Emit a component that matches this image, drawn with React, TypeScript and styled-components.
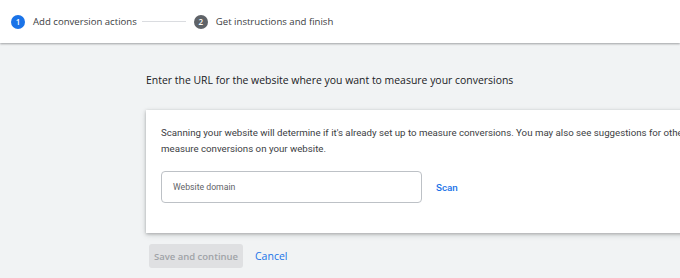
import React from "react";
import styled, { createGlobalStyle } from "styled-components";

const GlobalStyle = createGlobalStyle`
  html, body {
    margin: 0;
    padding: 0;
    background: #f1f3f4;
    overflow: hidden;
  }
  body {
    font-family: Roboto, "Liberation Sans", sans-serif;
    color: #202124;
  }
`;

const Page = styled.div`
  width: 680px;
  height: 278px;
  overflow: hidden;
  display: flex;
  flex-direction: column;
`;

const Header = styled.div`
  height: 43px;
  background: #fff;
  box-shadow: 0 1px 2px rgba(60, 64, 67, 0.45);
  display: flex;
  align-items: center;
  padding-left: 11px;
  flex-shrink: 0;
  position: relative;
  z-index: 1;
`;

const Step = styled.div`
  display: flex;
  align-items: center;
  gap: 8px;
  font-family: "Open Sans", Roboto, sans-serif;
  font-size: 9.6px;
  color: #3c4043;
`;

const StepNum = styled.span<{ $active?: boolean }>`
  width: 14px;
  height: 14px;
  border-radius: 50%;
  background: ${(p) => (p.$active ? "#1a73e8" : "#5f6368")};
  color: #fff;
  font-size: 8px;
  font-weight: 600;
  display: flex;
  align-items: center;
  justify-content: center;
`;

const Connector = styled.div`
  width: 44px;
  height: 1px;
  background: #dadce0;
  margin: 0 8px 0 5px;
`;

const Main = styled.div`
  display: flex;
  flex-direction: column;
  padding-left: 146px;
  padding-top: 29px;
`;

const Title = styled.div`
  font-family: "Open Sans", Roboto, sans-serif;
  font-size: 10.45px;
  color: #202124;
  line-height: 16px;
`;

const Card = styled.div`
  margin-top: 22px;
  width: 640px;
  height: 123px;
  box-sizing: border-box;
  background: #fff;
  box-shadow: 0 1px 3px rgba(60, 64, 67, 0.35), 0 2px 6px rgba(60, 64, 67, 0.15);
  padding: 15px 15px 0;
  display: flex;
  flex-direction: column;
`;

const Body = styled.div`
  font-size: 9.7px;
  line-height: 16px;
  color: #3c4043;
`;

const BodyLine = styled.div`
  white-space: nowrap;
`;

const InputRow = styled.div`
  display: flex;
  align-items: center;
  margin-top: 14px;
  gap: 14px;
`;

const Input = styled.div`
  width: 261px;
  height: 32px;
  box-sizing: border-box;
  border: 1px solid #bdc1c6;
  border-radius: 4px;
  display: flex;
  align-items: center;
  padding-left: 11px;
  font-size: 8.7px;
  color: #5f6368;
`;

const LinkButton = styled.span<{ $font?: string; $size?: number }>`
  color: #1a73e8;
  font-size: ${(p) => p.$size || 9.8}px;
  font-family: ${(p) => p.$font || "Roboto, sans-serif"};
  font-weight: 500;
`;

const Actions = styled.div`
  display: flex;
  align-items: center;
  margin-top: 11px;
  margin-left: 3px;
  gap: 12px;
`;

const SaveButton = styled.div`
  width: 94px;
  height: 24px;
  border-radius: 3px;
  background: #dfe0e2;
  color: #a0a3a7;
  font-family: "Open Sans", Roboto, sans-serif;
  font-size: 9.5px;
  font-weight: 600;
  display: flex;
  align-items: center;
  justify-content: center;
`;

export default function App() {
  return (
    <Page>
      <GlobalStyle />
      <Header>
        <Step>
          <StepNum $active>1</StepNum>
          Add conversion actions
        </Step>
        <Connector />
        <Step>
          <StepNum>2</StepNum>
          Get instructions and finish
        </Step>
      </Header>
      <Main>
        <Title>
          Enter the URL for the website where you want to measure your conversions
        </Title>
        <Card>
          <Body>
            <BodyLine>
              Scanning your website will determine if it's already set up to measure
              conversions. You may also see suggestions for other ways to
            </BodyLine>
            <BodyLine>measure conversions on your website.</BodyLine>
          </Body>
          <InputRow>
            <Input>Website domain</Input>
            <LinkButton>Scan</LinkButton>
          </InputRow>
        </Card>
        <Actions>
          <SaveButton>Save and continue</SaveButton>
          <LinkButton $font={'"Open Sans", Roboto, sans-serif'} $size={10.5}>
            Cancel
          </LinkButton>
        </Actions>
      </Main>
    </Page>
  );
}
